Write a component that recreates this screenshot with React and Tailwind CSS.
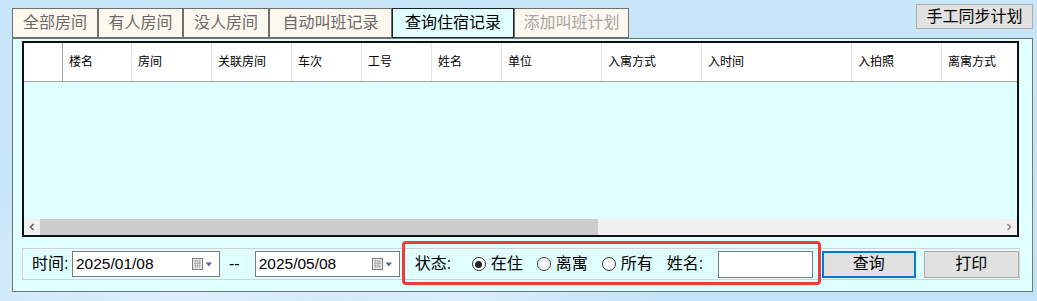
import React from "react";

const tabs = [
  { label: "全部房间", w: "w-[86px]", state: "idle" },
  { label: "有人房间", w: "w-[85px]", state: "idle" },
  { label: "没人房间", w: "w-[86px]", state: "idle" },
  { label: "自动叫班记录", w: "w-[123px]", state: "idle" },
  { label: "查询住宿记录", w: "w-[122px]", state: "active" },
  { label: "添加叫班计划", w: "w-[115px]", state: "disabled" },
];

const columns = [
  { label: "", w: "w-[39px]", first: true },
  { label: "楼名", w: "w-[69px]" },
  { label: "房间", w: "w-[80px]" },
  { label: "关联房间", w: "w-[80px]" },
  { label: "车次", w: "w-[70px]" },
  { label: "工号", w: "w-[70px]" },
  { label: "姓名", w: "w-[70px]" },
  { label: "单位", w: "w-[100px]" },
  { label: "入寓方式", w: "w-[100px]" },
  { label: "入时间", w: "w-[150px]" },
  { label: "入拍照", w: "w-[90px]" },
  { label: "离寓方式", w: "w-[90px]" },
];

const font = { fontFamily: '"Liberation Sans", "Noto Sans CJK SC", sans-serif' };

function CalendarIcon() {
  return (
    <svg width="21" height="12" viewBox="0 0 21 12" className="shrink-0">
      <rect x="0.5" y="0.5" width="10" height="11" fill="#e8e8e8" stroke="#7d7d7d" />
      <path d="M2 3h7M2 5.5h7M2 8h7M3.5 2v8M5.5 2v8M7.5 2v8" stroke="#a9a9a9" strokeWidth="0.8" />
      <path d="M13.5 4.5h6.5l-3.25 4z" fill="#4f6b8f" />
    </svg>
  );
}

function DateBox({ value, w }) {
  return (
    <div className={`${w} h-[26px] bg-white border border-[#7a7a7a] flex items-center justify-between pl-[3px] pr-[6px]`}>
      <span className="text-[15.5px] text-black">{value}</span>
      <CalendarIcon />
    </div>
  );
}

function Radio({ checked, label }) {
  return (
    <label className="flex items-center gap-[5px]">
      <span className="w-[14px] h-[14px] rounded-full border border-[#333] bg-white flex items-center justify-center">
        {checked && <span className="w-[7px] h-[7px] rounded-full bg-[#222]" />}
      </span>
      <span className="text-[16px] text-black">{label}</span>
    </label>
  );
}

export default function App() {
  return (
    <div
      className="w-[1037px] h-[301px] overflow-hidden relative bg-[#c6e5f9] flex flex-col"
      style={{
        ...font,
        backgroundImage:
          "radial-gradient(ellipse at 18% 95%, rgba(235,246,255,0.7) 0%, rgba(198,229,249,0) 30%), radial-gradient(ellipse at 45% 100%, rgba(230,244,255,0.6) 0%, rgba(198,229,249,0) 25%), linear-gradient(180deg, #c8e6fa 0%, #c3e3f8 100%)",
      }}
    >
      {/* top row */}
      <div className="flex items-start justify-between pl-[12px] pr-[4px]">
        <div className="flex mt-[8px]">
          {tabs.map((t) => (
            <div
              key={t.label}
              className={`${t.w} h-[30px] flex items-center justify-center text-[16px] border ${
                t.state === "active"
                  ? "bg-[#e0ffff] border-[#222] text-black"
                  : t.state === "disabled"
                  ? "bg-[#fdf8ee] border-[#6e6e6e] text-[#a5a5a5]"
                  : "bg-[#fdf8ee] border-[#6e6e6e] text-[#6a6a6a]"
              }`}
            >
              {t.label}
            </div>
          ))}
        </div>
        <button className="mt-[4px] w-[117px] h-[25px] bg-[#e1e1e1] border border-[#adadad] text-[16px] text-black flex items-center justify-center">
          手工同步计划
        </button>
      </div>

      {/* panel */}
      <div className="ml-[12px] mr-[4px] h-[254px] bg-[#e0ffff] border border-[#727272] pl-[9px] pr-[13px] pt-[2px]">
        {/* grid */}
        <div className="h-[196px] border-2 border-[#111] flex flex-col bg-[#e0ffff]">
          <div className="h-[39px] bg-white border-b border-[#a0a0a0] flex overflow-hidden">
            {columns.map((c, i) => (
              <div
                key={i}
                className={`${c.w} shrink-0 h-full flex items-center pl-[6px] text-[12px] text-black border-r ${
                  c.first ? "border-[#a0a0a0]" : "border-[#e3e3e3]"
                }`}
              >
                {c.label}
              </div>
            ))}
          </div>
          <div className="flex-1" />
          {/* horizontal scrollbar */}
          <div className="h-[16px] bg-[#f0f0f0] flex items-center">
            <div className="w-[16px] h-full flex items-center justify-center">
              <svg width="8" height="8" viewBox="0 0 8 8">
                <path d="M5.5 1L2.5 4l3 3" fill="none" stroke="#606060" strokeWidth="1.6" />
              </svg>
            </div>
            <div className="w-[558px] h-full bg-[#cdcdcd]" />
            <div className="flex-1" />
            <div className="w-[16px] h-full flex items-center justify-center">
              <svg width="8" height="8" viewBox="0 0 8 8">
                <path d="M2.5 1l3 3-3 3" fill="none" stroke="#8a8a8a" strokeWidth="1.6" />
              </svg>
            </div>
          </div>
        </div>

        {/* bottom group */}
        <div className="mt-[11px] w-[998px] h-[32px] border border-[#d2d2d2] flex items-center pl-[9px]">
          <span className="w-[40px] text-[16px] text-black">时间:</span>
          <DateBox value="2025/01/08" w="w-[148px]" />
          <span className="text-[16px] text-black ml-[9px] mr-[15px]">--</span>
          <DateBox value="2025/05/08" w="w-[145px]" />
          <div className="ml-[15px] flex items-center">
            <span className="w-[57px] text-[16px] text-black">状态:</span>
            <div className="flex items-center gap-[14px]">
              <Radio checked label="在住" />
              <Radio label="离寓" />
              <Radio label="所有" />
            </div>
            <span className="w-[51px] text-[16px] text-black ml-[14px]">姓名:</span>
            <div className="w-[95px] h-[27px] bg-white border border-[#7a7a7a]" />
          </div>
          <button className="ml-[9px] w-[94px] h-[27px] bg-[#e1e1e1] border-2 border-[#0078d7] text-[16px] text-black flex items-center justify-center">
            查询
          </button>
          <button className="ml-[8px] w-[95px] h-[27px] bg-[#e1e1e1] border border-[#adadad] text-[16px] text-black flex items-center justify-center">
            打印
          </button>
        </div>
      </div>

      {/* red highlight annotation */}
      <div className="absolute left-[402px] top-[241px] w-[419px] h-[44px] border-[3px] border-[#f03a3a] rounded-[4px] pointer-events-none" />
    </div>
  );
}
